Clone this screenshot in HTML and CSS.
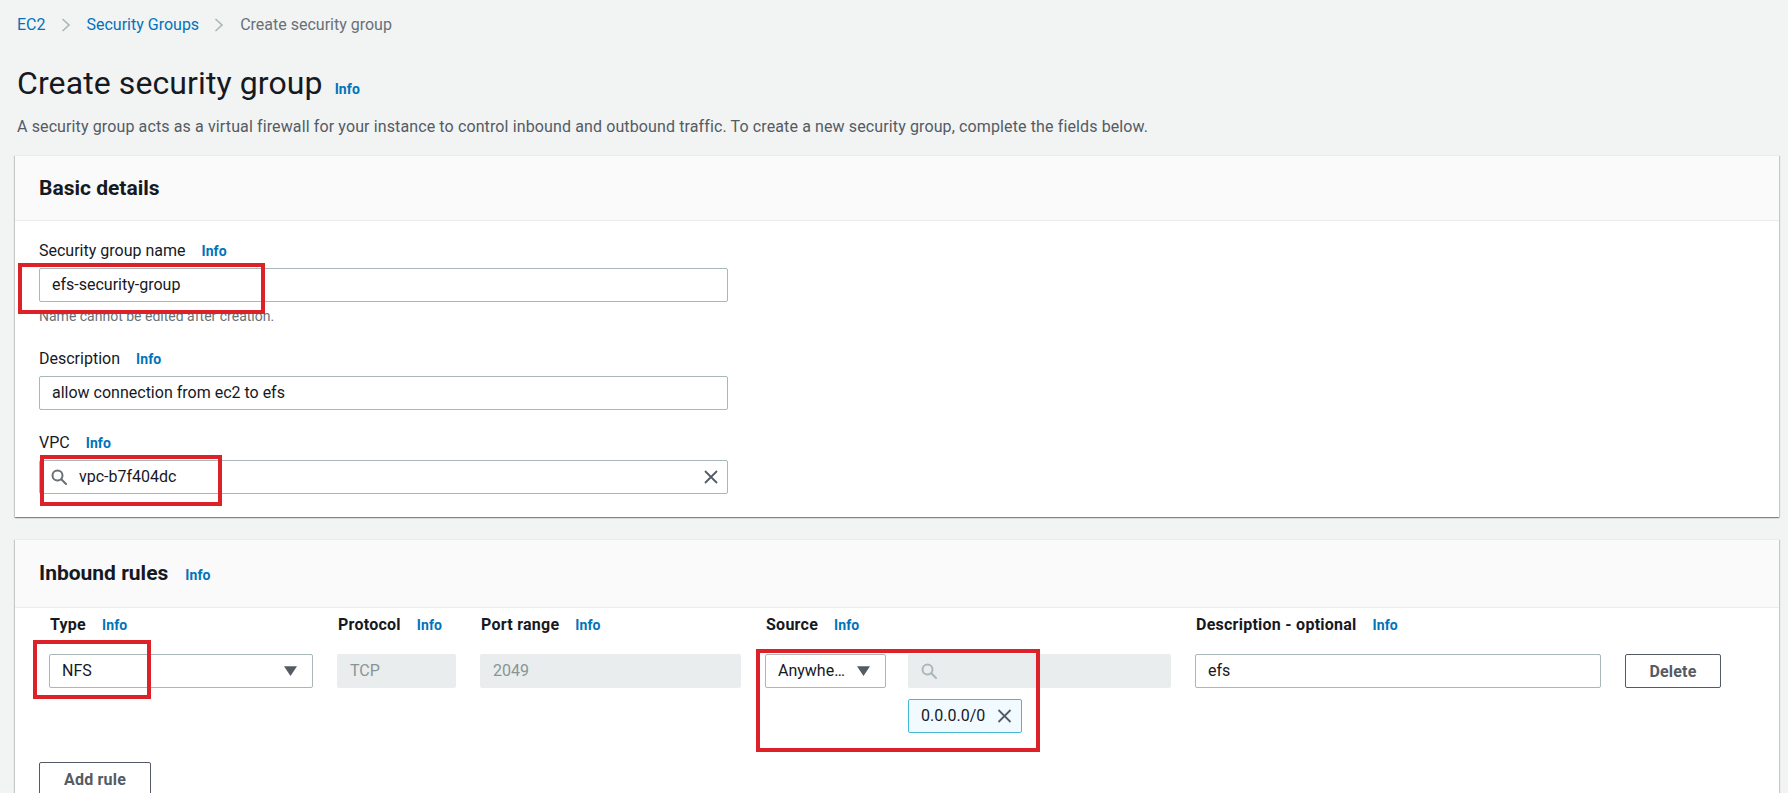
FILE: index.html
```html
<!DOCTYPE html>
<html lang="en">
<head>
<meta charset="utf-8">
<title>Create security group</title>
<link rel="stylesheet" href="styles.css">
</head>
<body>
<div class="page">
  <nav class="crumbs">
    <a href="#">EC2</a>
    <svg class="chev" viewBox="0 0 10 14"><path d="M1.5 1l6.5 6-6.5 6" fill="none" stroke="#aab7b8" stroke-width="1.6"/></svg>
    <a href="#">Security Groups</a>
    <svg class="chev" viewBox="0 0 10 14"><path d="M1.5 1l6.5 6-6.5 6" fill="none" stroke="#aab7b8" stroke-width="1.6"/></svg>
    <span class="current">Create security group</span>
  </nav>

  <h1 class="title">Create security group<a class="info" href="#">Info</a></h1>
  <p class="intro">A security group acts as a virtual firewall for your instance to control inbound and outbound traffic. To create a new security group, complete the fields below.</p>

  <section class="card">
    <header class="card-head"><h2>Basic details</h2></header>
    <div class="card-body">
      <div class="field">
        <div class="label">Security group name<a class="info" href="#">Info</a></div>
        <div class="input">efs-security-group</div>
        <div class="hint">Name cannot be edited after creation.</div>
      </div>
      <div class="field">
        <div class="label">Description<a class="info" href="#">Info</a></div>
        <div class="input">allow connection from ec2 to efs</div>
      </div>
      <div class="field">
        <div class="label">VPC<a class="info" href="#">Info</a></div>
        <div class="input search">
          <svg class="mag" viewBox="0 0 16 16"><circle cx="6.5" cy="6.5" r="5" fill="none" stroke="#687078" stroke-width="2"/><path d="M10.3 10.3l4.7 4.7" stroke="#687078" stroke-width="2" stroke-linecap="round"/></svg>
          <span class="grow">vpc-b7f404dc</span>
          <svg class="clear" viewBox="0 0 14 14"><path d="M1 1l12 12M13 1L1 13" stroke="#545b64" stroke-width="1.8"/></svg>
        </div>
      </div>
    </div>
  </section>

  <section class="card rules">
    <header class="card-head"><h2>Inbound rules</h2><a class="info" href="#">Info</a></header>
    <div class="card-body">
      <div class="grid heads">
        <div class="colhead">Type<a class="info" href="#">Info</a></div>
        <div class="colhead">Protocol<a class="info" href="#">Info</a></div>
        <div class="colhead">Port range<a class="info" href="#">Info</a></div>
        <div class="colhead">Source<a class="info" href="#">Info</a></div>
        <div class="colhead">Description - optional<a class="info" href="#">Info</a></div>
        <div></div>
      </div>
      <div class="grid row">
        <div class="input select">
          <span class="grow">NFS</span>
          <svg class="tri" viewBox="0 0 12 9"><path d="M0 0h12L6 9z" fill="#545b64"/></svg>
        </div>
        <div class="input disabled">TCP</div>
        <div class="input disabled">2049</div>
        <div class="source">
          <div class="input select src-select">
            <span class="grow">Anywhe…</span>
            <svg class="tri" viewBox="0 0 12 9"><path d="M0 0h12L6 9z" fill="#545b64"/></svg>
          </div>
          <div class="src-right">
            <div class="input disabled">
              <svg class="mag" viewBox="0 0 16 16"><circle cx="6.5" cy="6.5" r="5" fill="none" stroke="#aab7b8" stroke-width="2"/><path d="M10.3 10.3l4.7 4.7" stroke="#aab7b8" stroke-width="2" stroke-linecap="round"/></svg>
            </div>
            <div class="token">
              <span>0.0.0.0/0</span>
              <svg class="tok-x" viewBox="0 0 14 14"><path d="M1 1l12 12M13 1L1 13" stroke="#545b64" stroke-width="1.8"/></svg>
            </div>
          </div>
        </div>
        <div class="input">efs</div>
        <button class="btn btn-delete" type="button">Delete</button>
      </div>
      <button class="btn btn-add" type="button">Add rule</button>
    </div>
  </section>

  <div class="mark mark-name"></div>
  <div class="mark mark-vpc"></div>
  <div class="mark mark-type"></div>
  <div class="mark mark-source"></div>
</div>
</body>
</html>
```

FILE: styles.css
```css
html, body {
  margin: 0;
  padding: 0;
  background: #f2f3f3;
  overflow: hidden;
}

body {
  font-family: Roboto, "Liberation Sans", Arial, sans-serif;
  font-size: 16px;
  line-height: 22px;
  color: #16191f;
}

.page {
  position: relative;
  padding: 14px 9px 40px 15px;
}

/* breadcrumbs */
.crumbs {
  display: flex;
  align-items: center;
  height: 22px;
  padding-left: 2px;
}
.crumbs a {
  color: #0073bb;
  text-decoration: none;
}
.crumbs .current {
  color: #687078;
}
.chev {
  width: 10px;
  height: 14px;
  margin: 0 16px 0 15px;
}

/* heading */
.title {
  margin: 27px 0 0;
  padding-left: 2px;
  font-size: 32px;
  line-height: 40px;
  font-weight: 400;
  color: #16191f;
  letter-spacing: 0.1px;
}
.info {
  font-size: 14px;
  font-weight: 700;
  color: #0073bb;
  text-decoration: none;
  margin-left: 15px;
  letter-spacing: 0.1px;
}
.title .info {
  margin-left: 12px;
}
.intro {
  margin: 7px 0 0;
  padding-left: 2px;
  color: #545b64;
  letter-spacing: 0.12px;
}

/* cards */
.card {
  margin-top: 17px;
  background: #fff;
  border-top: 1px solid #eaeded;
  box-shadow: 0 1px 1px 0 rgba(0, 28, 36, 0.3), 1px 1px 1px 0 rgba(0, 28, 36, 0.15), -1px 1px 1px 0 rgba(0, 28, 36, 0.15);
}
.card-head {
  display: flex;
  align-items: baseline;
  background: #fafafa;
  border-bottom: 1px solid #eaeded;
  padding: 20px 24px;
}
.card-head h2 {
  margin: 0;
  font-size: 21px;
  line-height: 24px;
  font-weight: 700;
}
.card-head .info {
  margin-left: 17px;
}
.card-body {
  padding: 19px 24px 23px;
}

/* form fields */
.field + .field {
  margin-top: 22px;
}
.label .info {
  margin-left: 16px;
}
.input {
  box-sizing: border-box;
  display: flex;
  align-items: center;
  height: 34px;
  width: 689px;
  margin-top: 6px;
  padding: 0 12px;
  border: 1px solid #aab7b8;
  border-radius: 2px;
  background: #fff;
  color: #16191f;
  white-space: nowrap;
}
.hint {
  margin-top: 4px;
  font-size: 14px;
  line-height: 20px;
  color: #687078;
}
.grow {
  flex: 1;
}
.search {
  padding-left: 11px;
  padding-right: 9px;
}
.mag {
  width: 16px;
  height: 16px;
  margin-right: 12px;
  flex: none;
}
.clear {
  width: 14px;
  height: 14px;
  flex: none;
}

/* inbound rules */
.rules {
  margin-top: 22px;
}
.rules .card-head {
  padding: 21px 24px;
}
.rules .card-body {
  padding: 6px 24px 40px;
}
.grid {
  display: grid;
  grid-template-columns: 264px 119px 261px 406px 406px 96px;
  column-gap: 24px;
  padding-left: 10px;
}
.colhead {
  font-weight: 700;
  padding-left: 1px;
  white-space: nowrap;
  letter-spacing: 0.25px;
}
.colhead .info {
  margin-left: 16px;
}
.row {
  margin-top: 18px;
  align-items: start;
}
.row .input {
  width: auto;
  margin-top: 0;
}
.select {
  padding-right: 15px;
}
.tri {
  width: 13px;
  height: 10px;
  flex: none;
}
.disabled {
  background: #eaeded;
  border-color: #eaeded;
  color: #879596;
}
.source {
  display: flex;
  gap: 22px;
}
.row .src-select {
  width: 121px;
  flex: none;
}
.src-right {
  flex: 1;
}
.token {
  box-sizing: border-box;
  display: inline-flex;
  align-items: center;
  height: 34px;
  margin-top: 11px;
  padding: 0 9px 0 12px;
  border: 1px solid #44b9d6;
  border-radius: 2px;
  background: #f1faff;
  color: #16191f;
}
.tok-x {
  width: 15px;
  height: 14px;
  margin-left: 12px;
}

.btn {
  box-sizing: border-box;
  height: 34px;
  border: 1px solid #545b64;
  border-radius: 2px;
  background: #fff;
  color: #545b64;
  font-family: inherit;
  font-size: 16px;
  font-weight: 700;
  letter-spacing: 0.2px;
  padding: 0;
  text-align: center;
}
.btn-delete {
  width: 96px;
}
.btn-add {
  display: block;
  width: 112px;
  margin-top: 29px;
}

/* red annotation boxes drawn over the form */
.mark {
  position: absolute;
  box-sizing: border-box;
  border: 4px solid #dc2128;
  pointer-events: none;
}
.mark-name {
  left: 18px;
  top: 263px;
  width: 247px;
  height: 51px;
}
.mark-vpc {
  left: 40px;
  top: 455px;
  width: 182px;
  height: 51px;
}
.mark-type {
  left: 33px;
  top: 640px;
  width: 118px;
  height: 59px;
}
.mark-source {
  left: 756px;
  top: 649px;
  width: 284px;
  height: 103px;
}
```
